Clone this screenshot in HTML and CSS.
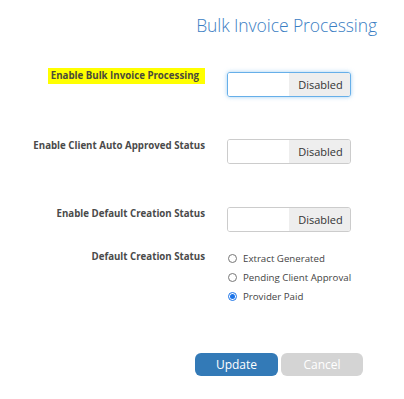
FILE: index.html
```html
<!DOCTYPE html>
<html>
<head>
<meta charset="utf-8">
<link rel="stylesheet" href="styles.css">
</head>
<body>
<div class="page">
  <h1 class="title">Bulk Invoice Processing</h1>
  <div class="form">
    <div class="row row1">
      <div class="label"><span class="hl">Enable Bulk Invoice Processing</span></div>
      <div class="toggle focused"><span class="blank"></span><span class="state">Disabled</span></div>
    </div>
    <div class="row row2">
      <div class="label">Enable Client Auto Approved Status</div>
      <div class="toggle"><span class="blank"></span><span class="state">Disabled</span></div>
    </div>
    <div class="row row3">
      <div class="label">Enable Default Creation Status</div>
      <div class="toggle"><span class="blank"></span><span class="state">Disabled</span></div>
    </div>
    <div class="row row4">
      <div class="label">Default Creation Status</div>
      <div class="options">
        <label class="opt"><span class="radio"></span>Extract Generated</label>
        <label class="opt"><span class="radio"></span>Pending Client Approval</label>
        <label class="opt"><span class="radio checked"></span>Provider Paid</label>
      </div>
    </div>
    <div class="actions">
      <button class="btn primary">Update</button>
      <button class="btn muted">Cancel</button>
    </div>
  </div>
</div>
</body>
</html>
```

FILE: styles.css
```css
* { box-sizing: border-box; }
html, body { margin: 0; padding: 0; background: #fff; }
body { font-family: "Open Sans", "Liberation Sans", sans-serif; width: 404px; height: 399px; overflow: hidden; }
.page { padding-top: 13px; }
.title {
  margin: 0;
  text-align: right;
  padding-right: 27px;
  font-size: 17.5px;
  line-height: 24px;
  font-weight: 300;
  letter-spacing: -0.08px;
  color: #3b7ec3;
}
.form { margin-top: 35px; }
.row { display: flex; align-items: flex-start; }
.label {
  width: 205px;
  flex: none;
  text-align: right;
  font-size: 9.7px;
  line-height: 14px;
  font-weight: 700;
  color: #4a4a4a;
}
.row1 .label { margin-top: -4px; margin-right: -6px; }
.row1 .toggle { margin-left: 28px; }
.hl { background: #ffff00; padding: 1px 6px 1px 3px; display: inline-block; color: #4a4a3a; }
.toggle {
  margin-left: 22px;
  width: 124px;
  height: 25px;
  border: 1px solid #ccc;
  border-radius: 3px;
  display: flex;
  overflow: hidden;
  background: #fff;
}
.toggle.focused {
  border-color: #66afe9;
  box-shadow: 0 0 4px rgba(102,175,233,.6);
}
.blank { width: 61px; background: #fff; }
.state {
  flex: 1;
  background: #eee;
  font-size: 11px;
  color: #333;
  display: flex;
  align-items: center;
  justify-content: center;
  padding-left: 2px;
}
.row2 { margin-top: 42px; }
.row3 { margin-top: 43px; }
.row4 { margin-top: 17px; }
.row4 .label { padding-top: 1px; }
.options { margin-left: 22px; display: flex; flex-direction: column; }
.opt {
  display: flex;
  align-items: center;
  height: 19px;
  font-size: 9.7px;
  color: #444;
}
.radio {
  width: 9px;
  height: 9px;
  border-radius: 50%;
  border: 1px solid #777;
  margin: 0 6px 0 1px;
  background: #fff;
  position: relative;
}
.radio.checked { border-color: #1a73e8; }
.radio.checked::after {
  content: "";
  position: absolute;
  left: 1px; top: 1px;
  width: 5px; height: 5px;
  border-radius: 50%;
  background: #1a73e8;
}
.actions { display: flex; gap: 3px; margin-top: 47px; padding-left: 195px; }
.btn {
  height: 23px;
  border: none;
  border-radius: 6px;
  font-family: inherit;
  font-size: 12px;
  color: #fff;
  padding: 0;
}
.primary { width: 83px; background: #337ab7; }
.muted { width: 82px; background: #d4d4d4; }
```
